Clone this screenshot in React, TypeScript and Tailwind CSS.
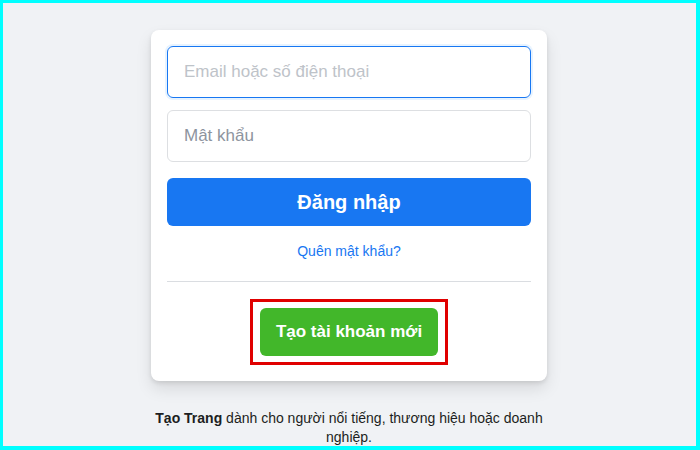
export default function App() {
  return (
    <div className="h-[450px] w-full overflow-hidden border-[3px] border-r-4 border-b-4 border-[#00ffff] bg-[#f0f2f5] font-['Liberation_Sans',Arial,sans-serif] text-[#1c1e21]">
      <div className="flex flex-col items-center pt-[27px] pr-px">
        <div className="w-[396px] rounded-lg bg-white p-4 shadow-[0_2px_4px_rgba(0,0,0,0.1),0_8px_16px_rgba(0,0,0,0.1)]">
          <input
            type="text"
            placeholder="Email hoặc số điện thoại"
            className="block h-[52px] w-full rounded-md border border-[#1877f2] px-4 text-[17px] text-[#1d2129] shadow-[0_0_0_2px_#e7f3ff] outline-none placeholder:text-[#bec3c9]"
          />
          <input
            type="password"
            placeholder="Mật khẩu"
            className="mt-3 block h-[52px] w-full rounded-md border border-[#dddfe2] px-4 text-[17px] text-[#1d2129] outline-none placeholder:text-[#8d949e]"
          />
          <button className="mt-4 block h-12 w-full rounded-md bg-[#1877f2] text-[20px] font-bold text-white">
            Đăng nhập
          </button>
          <div className="mt-4 text-center text-[14px] leading-[18px]">
            <a href="#" className="text-[#1877f2]">
              Quên mật khẩu?
            </a>
          </div>
          <div className="mt-[21px] border-b border-[#dadde1]" />
          <div className="mt-[17px] flex justify-center">
            <div className="border-[3px] border-[#e00000] px-[7px] py-[6px]">
              <button className="block h-12 w-[178px] rounded-md bg-[#42b72a] text-[17px] font-bold text-white">
                Tạo tài khoản mới
              </button>
            </div>
          </div>
        </div>
        <p className="mt-7 w-[396px] text-center text-[14px] leading-[19px]">
          <span className="font-bold">Tạo Trang</span> dành cho người nổi tiếng, thương hiệu hoặc doanh nghiệp.
        </p>
      </div>
    </div>
  );
}
